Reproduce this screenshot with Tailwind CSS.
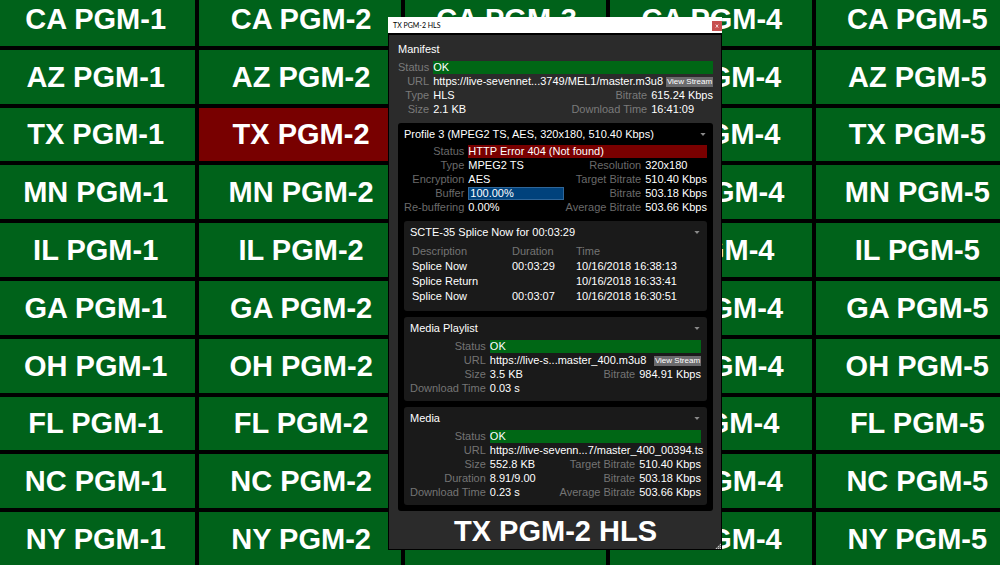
<!DOCTYPE html>
<html lang="en">
<head>
  <meta charset="UTF-8" />
  <meta name="viewport" content="width=device-width, initial-scale=1" />
  <title>TX PGM-2 HLS</title>
  <script src="https://cdn.jsdelivr.net/npm/@tailwindcss/browser@4"></script>
</head>
<body class="relative h-screen overflow-hidden bg-black font-['Liberation_Sans',Arial,sans-serif] text-white">
  <!-- Channel wall, runs past the edges of the screen -->
  <main id="wall" class="-ml-1.5 -mt-2 grid h-[calc(100vh+9px)] w-[calc(100vw+23px)] auto-rows-fr grid-cols-5 gap-1"></main>

  <!-- Stream window -->
  <section class="absolute left-[388px] top-[17px] w-[334px] bg-[#2b2b2b] text-[11px]">
    <header class="flex h-4 items-center justify-between bg-white pl-[5px] text-black">
      <h1 class="font-['Lato',sans-serif] text-[7px] leading-4">TX PGM-2 HLS</h1>
      <button type="button" aria-label="Close" class="mt-0.5 flex size-2.5 items-center justify-center bg-[#c75050]">
        <svg viewBox="0 0 10 10" class="size-2.5" fill="none" stroke="#f6dede" stroke-width="1"><path d="M3.8 3.6l2.4 3M6.2 3.6l-2.4 3" /></svg>
      </button>
    </header>

    <div class="border border-t-2 border-black pb-0.5 pl-[9px] pr-2 pt-[7px]">
      <h2 class="leading-[14px]">Manifest</h2>
      <dl class="mt-[5px] grid auto-rows-[13px] grid-cols-[auto_minmax(0,1fr)_auto_auto] gap-x-1 gap-y-px whitespace-nowrap leading-[13px]">
        <dt class="text-right text-[#7a7a7a]">Status</dt>
        <dd class="col-span-3 bg-[#006715]">OK</dd>
        <dt class="text-right text-[#7a7a7a]">URL</dt>
        <dd class="col-span-3 flex items-center justify-between">
          <span>https://live-sevennet...3749/MEL1/master.m3u8</span>
          <button type="button" class="h-2.5 w-[47px] bg-[#6b6b6d] text-[8px] leading-[10px]">View Stream</button>
        </dd>
        <dt class="text-right text-[#7a7a7a]">Type</dt>
        <dd>HLS</dd>
        <dt class="text-right text-[#7a7a7a]">Bitrate</dt>
        <dd>615.24 Kbps</dd>
        <dt class="text-right text-[#7a7a7a]">Size</dt>
        <dd>2.1 KB</dd>
        <dt class="text-right text-[#7a7a7a]">Download Time</dt>
        <dd>16:41:09</dd>
      </dl>

      <div class="mt-[7px] rounded-[3px] bg-black px-1.5 pb-1.5 pt-1">
        <button type="button" class="flex w-full items-center justify-between leading-[14px]">
          <span>Profile 3 (MPEG2 TS, AES, 320x180, 510.40 Kbps)</span>
          <svg viewBox="0 0 7 4" class="mr-px h-[3px] w-1.5" fill="#8a8a8a"><path d="M0 0h7L3.5 4z" /></svg>
        </button>
        <dl class="mt-1 grid auto-rows-[13px] grid-cols-[auto_minmax(0,1fr)_auto_auto] gap-x-1 gap-y-px whitespace-nowrap leading-[13px]">
          <dt class="text-right text-[#6a6a6a]">Status</dt>
          <dd class="col-span-3 bg-[#790000]">HTTP Error 404 (Not found)</dd>
          <dt class="text-right text-[#6a6a6a]">Type</dt>
          <dd>MPEG2 TS</dd>
          <dt class="text-right text-[#6a6a6a]">Resolution</dt>
          <dd>320x180</dd>
          <dt class="text-right text-[#6a6a6a]">Encryption</dt>
          <dd>AES</dd>
          <dt class="text-right text-[#6a6a6a]">Target Bitrate</dt>
          <dd>510.40 Kbps</dd>
          <dt class="text-right text-[#6a6a6a]">Buffer</dt>
          <dd class="w-24 border border-[#2f6699] bg-[#00427c] pl-px leading-[11px]">100.00%</dd>
          <dt class="text-right text-[#6a6a6a]">Bitrate</dt>
          <dd>503.18 Kbps</dd>
          <dt class="text-right text-[#6a6a6a]">Re-buffering</dt>
          <dd>0.00%</dd>
          <dt class="text-right text-[#6a6a6a]">Average Bitrate</dt>
          <dd>503.66 Kbps</dd>
        </dl>

        <div class="mt-[7px] rounded-[3px] bg-[#1a1a1a] px-1.5 pb-[7px] pt-1">
          <button type="button" class="flex w-full items-center justify-between leading-[14px]">
            <span>SCTE-35 Splice Now for 00:03:29</span>
            <svg viewBox="0 0 7 4" class="mr-px h-[3px] w-1.5" fill="#8a8a8a"><path d="M0 0h7L3.5 4z" /></svg>
          </button>
          <table class="ml-0.5 mt-[5px] w-full table-fixed text-left leading-[15px]">
            <thead class="text-[#747474]">
              <tr>
                <th class="w-[100px] font-normal">Description</th>
                <th class="w-16 font-normal">Duration</th>
                <th class="font-normal">Time</th>
              </tr>
            </thead>
            <tbody>
              <tr><td>Splice Now</td><td>00:03:29</td><td>10/16/2018 16:38:13</td></tr>
              <tr><td>Splice Return</td><td></td><td>10/16/2018 16:33:41</td></tr>
              <tr><td>Splice Now</td><td>00:03:07</td><td>10/16/2018 16:30:51</td></tr>
            </tbody>
          </table>
        </div>

        <div class="mt-1.5 rounded-[3px] bg-[#1a1a1a] px-1.5 pb-1.5 pt-1">
          <button type="button" class="flex w-full items-center justify-between leading-[14px]">
            <span>Media Playlist</span>
            <svg viewBox="0 0 7 4" class="mr-px h-[3px] w-1.5" fill="#8a8a8a"><path d="M0 0h7L3.5 4z" /></svg>
          </button>
          <dl class="mt-[5px] grid auto-rows-[13px] grid-cols-[auto_minmax(0,1fr)_auto_auto] gap-x-1 gap-y-px whitespace-nowrap leading-[13px]">
            <dt class="text-right text-[#747474]">Status</dt>
            <dd class="col-span-3 bg-[#006715]">OK</dd>
            <dt class="text-right text-[#747474]">URL</dt>
            <dd class="col-span-3 flex items-center justify-between">
              <span>https://live-s...master_400.m3u8</span>
              <button type="button" class="h-2.5 w-[47px] bg-[#6b6b6d] text-[8px] leading-[10px]">View Stream</button>
            </dd>
            <dt class="text-right text-[#747474]">Size</dt>
            <dd>3.5 KB</dd>
            <dt class="text-right text-[#747474]">Bitrate</dt>
            <dd>984.91 Kbps</dd>
            <dt class="text-right text-[#747474]">Download Time</dt>
            <dd class="col-span-3">0.03 s</dd>
          </dl>
        </div>

        <div class="mt-1.5 rounded-[3px] bg-[#1a1a1a] px-1.5 pb-1.5 pt-1">
          <button type="button" class="flex w-full items-center justify-between leading-[14px]">
            <span>Media</span>
            <svg viewBox="0 0 7 4" class="mr-px h-[3px] w-1.5" fill="#8a8a8a"><path d="M0 0h7L3.5 4z" /></svg>
          </button>
          <dl class="mt-[5px] grid auto-rows-[13px] grid-cols-[auto_minmax(0,1fr)_auto_auto] gap-x-1 gap-y-px whitespace-nowrap leading-[13px]">
            <dt class="text-right text-[#747474]">Status</dt>
            <dd class="col-span-3 bg-[#006715]">OK</dd>
            <dt class="text-right text-[#747474]">URL</dt>
            <dd class="col-span-3">https://live-sevenn...7/master_400_00394.ts</dd>
            <dt class="text-right text-[#747474]">Size</dt>
            <dd>552.8 KB</dd>
            <dt class="text-right text-[#747474]">Target Bitrate</dt>
            <dd>510.40 Kbps</dd>
            <dt class="text-right text-[#747474]">Duration</dt>
            <dd>8.91/9.00</dd>
            <dt class="text-right text-[#747474]">Bitrate</dt>
            <dd>503.18 Kbps</dd>
            <dt class="text-right text-[#747474]">Download Time</dt>
            <dd>0.23 s</dd>
            <dt class="text-right text-[#747474]">Average Bitrate</dt>
            <dd>503.66 Kbps</dd>
          </dl>
        </div>
      </div>

      <p class="mt-1 text-center text-[29px] font-bold leading-8">TX PGM-2 HLS</p>
    </div>

    <!-- Resize grip -->
    <svg viewBox="0 0 6 6" class="absolute bottom-px right-px size-1.5"><path d="M6 0v6H0z" fill="#6a6a6a" /><path d="M5 1h1v1h-1zM5 3h1v1h-1zM3 3h1v1h-1zM5 5h1v1h-1zM3 5h1v1h-1zM1 5h1v1h-1z" fill="#c4c4c4" /></svg>
  </section>

  <script>
    const wall = document.getElementById('wall');
    const states = ['CA', 'AZ', 'TX', 'MN', 'IL', 'GA', 'OH', 'FL', 'NC', 'NY'];
    const alarms = ['TX PGM-2'];

    states.forEach(state => {
      for (let i = 1; i <= 5; i++) {
        const name = `${state} PGM-${i}`;
        const cell = document.createElement('div');
        cell.className = alarms.includes(name)
          ? 'flex items-center justify-center whitespace-nowrap bg-[#780000] pl-0.5 text-[29px] font-bold leading-8'
          : 'flex items-center justify-center whitespace-nowrap bg-[#00621a] pl-0.5 text-[29px] font-bold leading-8';
        cell.textContent = name;
        wall.appendChild(cell);
      }
    });
  </script>
</body>
</html>
